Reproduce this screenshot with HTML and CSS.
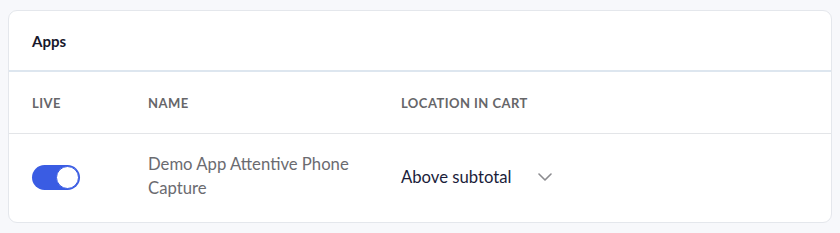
FILE: index.html
```html
<!DOCTYPE html>
<html lang="en">
<head>
<meta charset="utf-8">
<title>Apps</title>
<link rel="stylesheet" href="styles.css">
</head>
<body>
<section class="card">
  <header class="card-header">
    <h2 class="card-title">Apps</h2>
  </header>
  <div class="row row-head">
    <div class="cell col-live">LIVE</div>
    <div class="cell col-name">NAME</div>
    <div class="cell col-loc">LOCATION IN CART</div>
  </div>
  <div class="row row-body">
    <div class="cell col-live">
      <span class="toggle"><span class="knob"></span></span>
    </div>
    <div class="cell col-name app-name">Demo App Attentive Phone<br>Capture</div>
    <div class="cell col-loc">
      <span class="select">
        <span class="select-value">Above subtotal</span>
        <svg class="chevron" width="14" height="8" viewBox="0 0 14 8" aria-hidden="true">
          <path d="M1 1l6 6 6-6" fill="none" stroke="#8b8b8f" stroke-width="1.6" stroke-linecap="round" stroke-linejoin="round"/>
        </svg>
      </span>
    </div>
  </div>
</section>
</body>
</html>
```
FILE: styles.css
```css
* { box-sizing: border-box; }
html, body { margin: 0; }
body {
  background: #f7f8fb;
  padding: 10px 8px;
  font-family: Lato, "Noto Sans", sans-serif;
}
.card {
  background: #fff;
  border: 1px solid #e4e7ec;
  border-radius: 9px;
  height: 213px;
}
.card-header {
  height: 61px;
  display: flex;
  align-items: center;
  padding: 0 23px;
  border-bottom: 2px solid #dde6ef;
}
.card-title {
  margin: 0;
  font-size: 15px;
  font-weight: 700;
  color: #17172b;
}
.row {
  display: grid;
  grid-template-columns: 116px 253px 1fr;
  padding-left: 23px;
  align-items: center;
}
.row-head {
  height: 62px;
  border-bottom: 1px solid #e3e5e8;
  font-size: 13px;
  font-weight: 700;
  letter-spacing: 0.45px;
  color: #666669;
}
.row-body {
  height: 86px;
}
.app-name {
  font-size: 16.7px;
  line-height: 24px;
  color: #6b6b70;
  padding-bottom: 3px;
}
.toggle {
  display: flex;
  justify-content: flex-end;
  width: 48px;
  height: 25px;
  border-radius: 13px;
  background: #3a5ce3;
  padding: 1px;
  margin-top: 1px;
}
.knob {
  width: 23px;
  height: 23px;
  border-radius: 50%;
  background: #fff;
  border: 1px solid #3a5ce3;
}
.select {
  display: inline-flex;
  align-items: center;
  gap: 26px;
}
.select-value {
  font-size: 16.7px;
  color: #1b1d3a;
}
.chevron { display: block; }
```
